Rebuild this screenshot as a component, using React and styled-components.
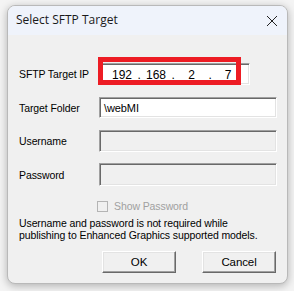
import React from "react";
import styled, { createGlobalStyle } from "styled-components";

const Global = createGlobalStyle`
  html, body { margin: 0; padding: 0; background: #f4f4f4; }
  body { width: 294px; height: 291px; overflow: hidden; }
`;

const Page = styled.div`
  padding: 5px 0 0 7px;
`;

const Window = styled.div`
  width: 281px;
  height: 279px;
  box-sizing: border-box;
  border: 1px solid #b9b9b9;
  border-radius: 8px;
  background: #f0f0f0;
  box-shadow: 0 2px 9px rgba(0, 0, 0, 0.28);
  overflow: hidden;
  display: flex;
  flex-direction: column;
  font-family: "Liberation Sans", Arial, sans-serif;
  font-size: 10.5px;
  letter-spacing: -0.1px;
  color: #000;
`;

const TitleBar = styled.div`
  height: 29px;
  background: #eff3fb;
  display: flex;
  align-items: center;
  justify-content: space-between;
  padding: 0 9px 0 8px;
`;

const Title = styled.span`
  font-family: "Open Sans", "Noto Sans", sans-serif;
  font-size: 12px;
  letter-spacing: 0;
  color: #1a1a1a;
  margin-top: -2px;
`;

const Body = styled.div`
  display: flex;
  flex-direction: column;
  padding: 0 10px 0 10px;
`;

const FieldRow = styled.div`
  display: grid;
  grid-template-columns: 81px 178px;
  align-items: center;
  margin-top: ${(p) => p.$top}px;
`;

const Label = styled.span`
  padding-left: 1px;
`;

const sunken = `
  box-sizing: border-box;
  border-style: solid;
  border-width: 1px;
  border-color: #a0a0a0 #ffffff #ffffff #a0a0a0;
  box-shadow: inset 1px 1px 0 #696969, inset -1px -1px 0 #e3e3e3;
`;

const TextBox = styled.div`
  ${sunken}
  height: ${(p) => p.$h || 22}px;
  background: ${(p) => (p.$disabled ? "#f0f0f0" : "#ffffff")};
  padding: 3px 0 0 4px;
  line-height: 14px;
  font-size: 11px;
`;

const IpWrap = styled.div`
  position: relative;
  width: 149px;
`;

const IpBox = styled.div`
  ${sunken}
  height: 22px;
  width: 149px;
  margin-left: 2px;
  background: #fff;
  display: flex;
  align-items: center;
  padding: 1px 0 0 6px;
`;

const Octet = styled.span`
  width: ${(p) => p.$w}px;
  text-align: center;
  font-size: 12px;
  letter-spacing: 0;
`;

const Dot = styled.span`
  width: 6px;
  text-align: center;
  font-size: 12px;
`;

const Highlight = styled.div`
  position: absolute;
  left: -1px;
  top: -6px;
  width: 143px;
  height: 28px;
  box-sizing: border-box;
  border: 5px solid #ed1c24;
  pointer-events: none;
`;

const CheckRow = styled.div`
  display: flex;
  align-items: center;
  margin-top: 14px;
  margin-left: 79px;
  color: #a0a0a0;
  gap: 6px;
`;

const CheckBox = styled.span`
  width: 11px;
  height: 11px;
  box-sizing: border-box;
  border: 1px solid #b4b4b4;
  background: #f0f0f0;
`;

const Note = styled.p`
  margin: 5px 0 0 1px;
  line-height: 12px;
`;

const Buttons = styled.div`
  display: flex;
  justify-content: flex-end;
  gap: 26px;
  margin-top: 10px;
  padding-right: 1px;
`;

const Button = styled.div`
  width: 74px;
  height: 22px;
  box-sizing: border-box;
  border-style: solid;
  border-width: 1px;
  border-color: #ffffff #696969 #696969 #ffffff;
  box-shadow: inset -1px -1px 0 #a0a0a0, inset 1px 1px 0 #e3e3e3;
  background: #f0f0f0;
  display: flex;
  align-items: center;
  justify-content: center;
  font-size: 11.5px;
`;

const Close = () => (
  <svg width="12" height="12" viewBox="0 0 12 12">
    <path d="M1 1 L11 11 M11 1 L1 11" stroke="#222" strokeWidth="1" />
  </svg>
);

export default function App() {
  return (
    <Page>
      <Global />
      <Window>
        <TitleBar>
          <Title>Select SFTP Target</Title>
          <Close />
        </TitleBar>
        <Body>
          <FieldRow $top={28}>
            <Label>SFTP Target IP</Label>
            <IpWrap>
              <IpBox>
                <Octet $w={28}>192</Octet>
                <Dot>.</Dot>
                <Octet $w={28}>168</Octet>
                <Dot>.</Dot>
                <Octet $w={31}>2</Octet>
                <Dot>.</Dot>
                <Octet $w={30}>7</Octet>
              </IpBox>
              <Highlight />
            </IpWrap>
          </FieldRow>
          <FieldRow $top={12}>
            <Label>Target Folder</Label>
            <TextBox $h={21}>\webMI</TextBox>
          </FieldRow>
          <FieldRow $top={12}>
            <Label>Username</Label>
            <TextBox $disabled />
          </FieldRow>
          <FieldRow $top={11}>
            <Label>Password</Label>
            <TextBox $disabled $h={23} />
          </FieldRow>
          <CheckRow>
            <CheckBox />
            <span>Show Password</span>
          </CheckRow>
          <Note>
            Username and password is not required while
            <br />
            publishing to Enhanced Graphics supported models.
          </Note>
          <Buttons>
            <Button>OK</Button>
            <Button>Cancel</Button>
          </Buttons>
        </Body>
      </Window>
    </Page>
  );
}
